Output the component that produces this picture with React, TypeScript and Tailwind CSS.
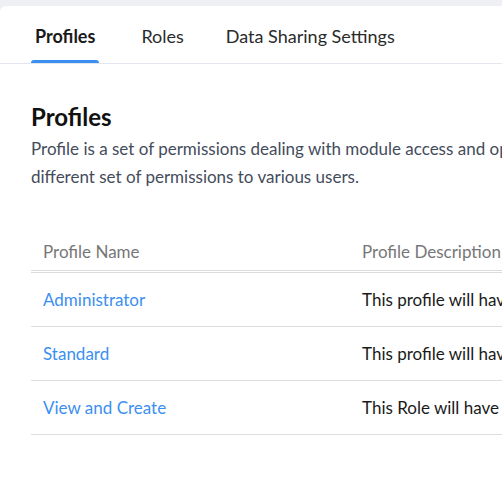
const rows = [
  { name: "Administrator", desc: "This profile will have all the permissions." },
  { name: "Standard", desc: "This profile will have all the permissions except administrative privileges." },
  { name: "View and Create", desc: "This Role will have permissions to view and create records." },
];

export default function App() {
  return (
    <div className="h-[487px] w-[502px] overflow-hidden bg-[#eef0f4] pt-[6px] font-[Lato,sans-serif] whitespace-nowrap">
      <div className="h-full w-[900px] rounded-tl-md bg-white">
        {/* Tabs */}
        <div className="flex h-[58px] items-end gap-[42px] border-b border-[#e3e6ec] pl-[31px]">
          <div className="flex h-full flex-col justify-between">
            <span className="px-[4px] pt-[17px] text-[18px] font-bold text-[#1a1a1a]">Profiles</span>
            <div className="h-[3px] rounded-t bg-[#3b8ff0]" />
          </div>
          {["Roles", "Data Sharing Settings"].map((t) => (
            <div key={t} className="flex h-full flex-col justify-between">
              <span className="pt-[17px] text-[18px] text-[#2b2b2b]">{t}</span>
              <div className="h-[3px]" />
            </div>
          ))}
        </div>

        {/* Content */}
        <div className="px-[31px] pt-[38px]">
          <h1 className="text-[24px] font-bold leading-[30px] text-[#111]">Profiles</h1>
          <p className="mt-[3px] text-[17px] leading-[28px] text-[#444c5c]">
            Profile is a set of permissions dealing with module access and operations. You can provide
            <br />
            different set of permissions to various users.
          </p>

          <div className="mt-[42px]">
            <div className="flex h-[40px] items-center border-b-[3px] border-double border-[#dcdcdc] text-[17px] text-[#777]">
              <div className="w-[331px] shrink-0 pl-[12px]">Profile Name</div>
              <div>Profile Description</div>
            </div>
            {rows.map((r) => (
              <div key={r.name} className="flex h-[54px] items-center border-b border-[#dedede] text-[17px]">
                <div className="w-[331px] shrink-0 pl-[12px] text-[#3b8ff0]">{r.name}</div>
                <div className="text-[#1a1a1a]">{r.desc}</div>
              </div>
            ))}
          </div>
        </div>
      </div>
    </div>
  );
}
